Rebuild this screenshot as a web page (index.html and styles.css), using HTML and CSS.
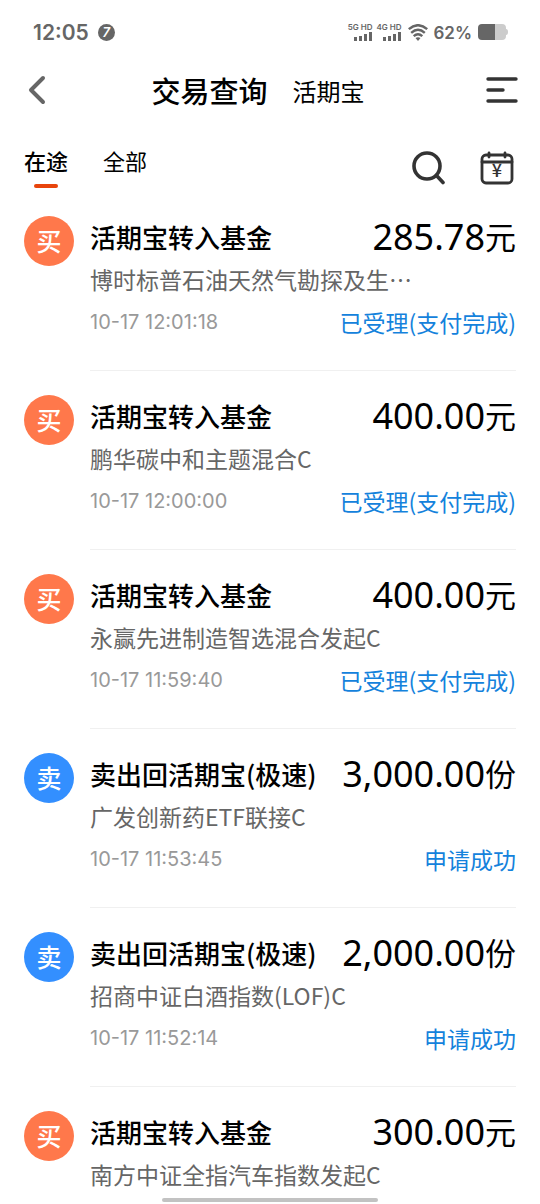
FILE: index.html
```html
<!DOCTYPE html>
<html lang="zh-CN">
<head>
    <meta charset="UTF-8">
    <meta name="viewport" content="width=device-width, initial-scale=1.0">
    <title>交易查询</title>
    <link rel="stylesheet" href="styles.css">
</head>
<body>
    <div class="status-bar">
        <span class="clock">12:05</span>
        <span class="notice">7</span>
        <div class="status-right">
            <div class="signal">
                <span>5G HD</span>
                <svg width="18" height="9" viewBox="0 0 18 9"><path d="M1.5 5v4M6.5 4v5M11.5 2v7M16.5 0v9" stroke="#666" stroke-width="3"/></svg>
            </div>
            <div class="signal">
                <span>4G HD</span>
                <svg width="18" height="9" viewBox="0 0 18 9"><path d="M1.5 5v4M6.5 4v5M11.5 2v7M16.5 0v9" stroke="#666" stroke-width="3"/></svg>
            </div>
            <svg class="wifi" width="20" height="17" viewBox="0 0 20 17" fill="none" stroke="#666" stroke-width="2.4">
                <path d="M.8 5.2Q10-2.8 19.2 5.2M3.2 8.8Q10 2.8 16.8 8.8M5.7 12.2Q10 8.4 14.3 12.2"/>
                <path d="M7.5 14Q10 12.6 12.5 14L10 17z" fill="#666" stroke="none"/>
            </svg>
            <span class="percent">62%</span>
            <svg class="battery" width="30" height="16" viewBox="0 0 30 16">
                <path d="M17 0h7q4 0 4 4v1q2 0 2 3t-2 3v1q0 4-4 4h-7z" fill="#ccc"/>
                <path d="M17 0v16H4q-4 0-4-4V4q0-4 4-4z" fill="#666"/>
            </svg>
        </div>
    </div>

    <header class="header">
        <button class="icon-button back" aria-label="返回">
            <svg width="18" height="30" viewBox="0 0 18 30"><path d="M15 3L3 15l12 12" fill="none" stroke="#666" stroke-width="4" stroke-linecap="round" stroke-linejoin="round"/></svg>
        </button>
        <h1>交易查询</h1>
        <a class="sub-title" href="#">活期宝</a>
        <button class="icon-button menu" aria-label="菜单">
            <svg width="32" height="26" viewBox="0 0 32 26"><path d="M2 2h28M2 13h15M2 24h28" stroke="#333" stroke-width="3.4" stroke-linecap="round"/></svg>
        </button>
    </header>

    <nav class="tabs">
        <button class="tab active">在途</button>
        <button class="tab">全部</button>
        <div class="tools">
            <button class="icon-button" aria-label="搜索">
                <svg width="34" height="34" viewBox="0 0 34 34" fill="none" stroke="#333" stroke-width="3.6" stroke-linecap="round"><circle cx="15" cy="15" r="13"/><path d="M24.5 24.5l6.5 7"/></svg>
            </button>
            <button class="icon-button" aria-label="日历">
                <svg width="34" height="34" viewBox="0 0 34 34" fill="none" stroke="#333" stroke-width="2.8" stroke-linecap="round"><rect x="2" y="4" width="30" height="28" rx="4"/><path d="M2 11h30M9 2v4M25 2v4"/><text class="yen" x="17" y="26" text-anchor="middle">¥</text></svg>
            </button>
        </div>
    </nav>

    <ul class="list">
        <li class="row">
            <span class="badge buy">买</span>
            <div class="detail">
                <div class="line"><h2>活期宝转入基金</h2><span class="amount">285.78<em>元</em></span></div>
                <p class="fund">博时标普石油天然气勘探及生…</p>
                <div class="line bottom"><time>10-17 12:01:18</time><span class="state">已受理(支付完成)</span></div>
            </div>
        </li>
        <li class="row">
            <span class="badge buy">买</span>
            <div class="detail">
                <div class="line"><h2>活期宝转入基金</h2><span class="amount">400.00<em>元</em></span></div>
                <p class="fund">鹏华碳中和主题混合C</p>
                <div class="line bottom"><time>10-17 12:00:00</time><span class="state">已受理(支付完成)</span></div>
            </div>
        </li>
        <li class="row">
            <span class="badge buy">买</span>
            <div class="detail">
                <div class="line"><h2>活期宝转入基金</h2><span class="amount">400.00<em>元</em></span></div>
                <p class="fund">永赢先进制造智选混合发起C</p>
                <div class="line bottom"><time>10-17 11:59:40</time><span class="state">已受理(支付完成)</span></div>
            </div>
        </li>
        <li class="row">
            <span class="badge sell">卖</span>
            <div class="detail">
                <div class="line"><h2>卖出回活期宝(极速)</h2><span class="amount">3,000.00<em>份</em></span></div>
                <p class="fund">广发创新药ETF联接C</p>
                <div class="line bottom"><time>10-17 11:53:45</time><span class="state">申请成功</span></div>
            </div>
        </li>
        <li class="row">
            <span class="badge sell">卖</span>
            <div class="detail">
                <div class="line"><h2>卖出回活期宝(极速)</h2><span class="amount">2,000.00<em>份</em></span></div>
                <p class="fund">招商中证白酒指数(LOF)C</p>
                <div class="line bottom"><time>10-17 11:52:14</time><span class="state">申请成功</span></div>
            </div>
        </li>
        <li class="row">
            <span class="badge buy">买</span>
            <div class="detail">
                <div class="line"><h2>活期宝转入基金</h2><span class="amount">300.00<em>元</em></span></div>
                <p class="fund">南方中证全指汽车指数发起C</p>
            </div>
        </li>
    </ul>

    <div class="home-bar"></div>
</body>
</html>
```
FILE: styles.css
```css
* {
    box-sizing: border-box;
}
body {
    display: flex;
    flex-direction: column;
    height: 100vh;
    margin: 0;
    overflow: hidden;
    background: #fff;
    color: #000;
    font-family: "Noto Sans CJK SC", sans-serif;
}
h1, h2, p, ul {
    margin: 0;
    padding: 0;
}
button {
    padding: 0;
    border: 0;
    background: none;
    color: inherit;
    font-family: inherit;
    cursor: pointer;
}
svg {
    display: block;
}

/* status bar */
.status-bar {
    display: flex;
    align-items: center;
    height: 64px;
    padding: 0 32px 0 33px;
    color: #666;
    font-family: Inter, sans-serif;
    font-weight: 600;
}
.clock {
    font-size: 21px;
}
.notice {
    width: 17px;
    height: 17px;
    margin-left: 9px;
    border-radius: 50%;
    background: #666;
    color: #fff;
    font-size: 13px;
    font-style: italic;
    line-height: 17px;
    text-align: center;
}
.status-right {
    display: flex;
    align-items: center;
    margin-left: auto;
}
.signal {
    display: flex;
    flex-direction: column;
    align-items: flex-end;
    gap: 1px;
    width: 29px;
    font-size: 8px;
    line-height: 8px;
    white-space: nowrap;
}
.wifi {
    margin-left: 7px;
}
.percent {
    margin: 2px 6px 0 5px;
    font-size: 17px;
}

/* header */
.header {
    display: flex;
    align-items: center;
    height: 52px;
    padding: 0 22px 0 28px;
}
.header h1 {
    margin: 0 25px 0 auto;
    font-size: 29px;
    font-weight: 500;
}
.sub-title {
    margin-right: auto;
    padding-right: 16px;
    color: #000;
    font-size: 24px;
    text-decoration: none;
}

/* tabs */
.tabs {
    display: flex;
    align-items: flex-start;
    gap: 35px;
    height: 76px;
    padding: 27px 26px 0 24px;
}
.tab {
    position: relative;
    height: 45px;
    padding-bottom: 10px;
    font-size: 22px;
    line-height: 35px;
}
.tab.active {
    font-weight: 500;
}
.tab.active::after {
    content: "";
    position: absolute;
    bottom: 0;
    left: 10px;
    width: 24px;
    height: 4px;
    border-radius: 2px;
    background: #e8440c;
}
.tools {
    display: flex;
    gap: 34px;
    margin-left: auto;
    padding-top: 8px;
}
.yen {
    fill: #333;
    stroke: none;
    font-family: "Noto Sans CJK SC", sans-serif;
    font-size: 18px;
    font-weight: 500;
}

/* list */
.list {
    flex: 1;
    min-height: 0;
    overflow: hidden;
    list-style: none;
}
.row {
    display: flex;
    gap: 16px;
    padding: 22px 24px 0;
}
.badge {
    flex: none;
    width: 50px;
    height: 50px;
    margin-top: 2px;
    border-radius: 50%;
    color: #fff;
    font-size: 25px;
    font-weight: 500;
    line-height: 48px;
    text-align: center;
}
.buy {
    background: #ff784b;
}
.sell {
    background: #338fff;
}
.detail {
    flex: 1;
    min-width: 0;
    padding-bottom: 26px;
    border-bottom: 1px solid #f0f0f0;
}
.line {
    display: flex;
    align-items: center;
    justify-content: space-between;
    height: 44px;
    white-space: nowrap;
}
.line h2 {
    font-size: 26px;
    font-weight: 500;
}
.amount {
    font-family: "Noto Sans", "Noto Sans CJK SC", sans-serif;
    font-size: 36px;
    line-height: 40px;
}
.amount em {
    font-family: "Noto Sans CJK SC", sans-serif;
    font-size: 31px;
    font-style: normal;
    vertical-align: 1px;
}
.fund {
    overflow: hidden;
    color: #666;
    font-size: 23px;
    line-height: 42px;
    white-space: nowrap;
}
.bottom time {
    color: #999;
    font-family: Inter, sans-serif;
    font-size: 20px;
}
.state {
    color: #1482dc;
    font-size: 23px;
}

.home-bar {
    position: fixed;
    bottom: 2px;
    left: 30%;
    width: 40%;
    height: 4px;
    border-radius: 2px;
    background: #c2c2c2;
}
```
